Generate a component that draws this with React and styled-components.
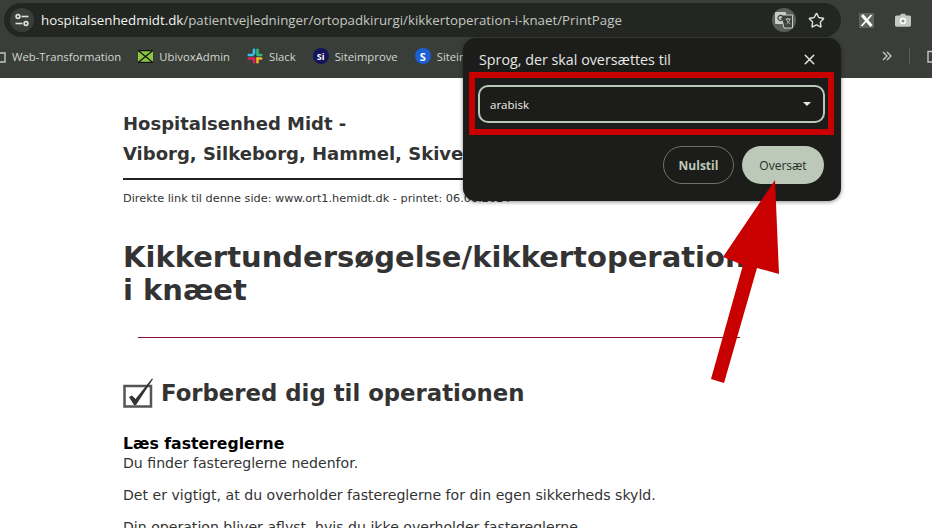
import React from "react";
import styled, { createGlobalStyle } from "styled-components";
import { Star, X } from "lucide-react";

const GlobalStyle = createGlobalStyle`
    html, body {
        margin: 0;
        padding: 0;
        background: #fff;
        overflow: hidden;
    }
`;

const Screen = styled.div`
    position: relative;
    width: 932px;
    height: 528px;
    overflow: hidden;
    font-family: "DejaVu Sans", sans-serif;
`;

const Chrome = styled.header`
    height: 78px;
    background: #3a3e39;
    font-family: "Open Sans", "Noto Sans", sans-serif;
`;

const TopRow = styled.div`
    display: flex;
    align-items: flex-start;
    height: 38px;
    padding: 3px 0 0 4px;
    box-sizing: border-box;
`;

const UrlPill = styled.div`
    display: flex;
    align-items: center;
    flex: none;
    width: 837px;
    height: 34px;
    background: #232622;
    border-radius: 17px;
    padding: 0 16px 0 6px;
    box-sizing: border-box;
`;

const RoundIcon = styled.span`
    display: flex;
    align-items: center;
    justify-content: center;
    flex: none;
    width: 24px;
    height: 24px;
    border-radius: 50%;
    background: ${p => p.$bg || "transparent"};
`;

const UrlText = styled.div`
    flex: 1;
    margin-left: 7px;
    font-size: 13.3px;
    color: #c4c8c1;
    white-space: nowrap;
`;

const Host = styled.span`
    color: #f1f3ee;
`;

const ToolIcons = styled.div`
    display: flex;
    align-items: center;
    gap: 12px;
`;

const Extensions = styled.div`
    display: flex;
    align-items: center;
    gap: 21px;
    height: 34px;
    margin-left: 18px;
`;

const BookmarkRow = styled.nav`
    display: flex;
    align-items: center;
    height: 38px;
    padding-bottom: 2px;
    box-sizing: border-box;
    font-size: 11.3px;
    color: #d3d6d0;
    white-space: nowrap;
`;

const BookmarkList = styled.div`
    display: flex;
    align-items: center;
    flex: 1;
    min-width: 0;
    margin-left: -10px;
    overflow: visible;
`;

const Bookmark = styled.span`
    display: flex;
    align-items: center;
    gap: 6px;
    margin-right: 17px;
`;

const Badge = styled.span`
    display: flex;
    align-items: center;
    justify-content: center;
    width: 16px;
    height: 16px;
    border-radius: 50%;
    background: ${p => p.$bg};
    color: #fff;
    font-size: ${p => p.$size || 9}px;
    font-weight: 700;
`;

const BarEnd = styled.div`
    display: flex;
    align-items: center;
    flex: none;
    gap: 17px;
    margin-right: -11px;
`;

const Divider = styled.span`
    width: 1px;
    height: 16px;
    background: #5b5f5a;
`;

const Page = styled.main`
    width: 632px;
    padding: 31px 0 0 123px;
    color: #333;
`;

const Org = styled.div`
    font-size: 18px;
    font-weight: 700;
    line-height: 30px;
`;

const HeavyRule = styled.hr`
    height: 2px;
    margin: 9px 0 0;
    border: 0;
    background: #222;
`;

const SmallLine = styled.p`
    margin: 12px 0 0;
    font-size: 11.3px;
    line-height: 14px;
`;

const Title = styled.h1`
    margin: 35px 0 0;
    font-size: 29px;
    line-height: 33px;
    font-weight: 700;
`;

const ThinRule = styled.hr`
    height: 1px;
    margin: 30px 15px 0;
    border: 0;
    background: #8a0f3c;
`;

const SectionHead = styled.h2`
    display: flex;
    align-items: center;
    gap: 7px;
    margin: 38px 0 0;
    font-size: 22.8px;
    line-height: 34px;
    font-weight: 700;
`;

const SubHead = styled.h3`
    margin: 24px 0 0;
    font-size: 15.7px;
    line-height: 19px;
    font-weight: 700;
    color: #000;
`;

const Body = styled.p`
    margin: ${p => (p.$tight ? "1px 0 0" : "13px 0 0")};
    font-size: 14.1px;
    line-height: 19px;
`;

const Popup = styled.section`
    position: absolute;
    left: 463px;
    top: 38px;
    width: 378px;
    height: 163px;
    box-sizing: border-box;
    padding: 0 17px 0 16px;
    background: #1c1d1b;
    border-radius: 13px;
    box-shadow: 0 1px 4px rgba(0, 0, 0, 0.45);
    font-family: "Open Sans", "Noto Sans", sans-serif;
`;

const PopupHead = styled.div`
    display: flex;
    align-items: center;
    justify-content: space-between;
    height: 34px;
    padding: 9px 6px 0 0;
    box-sizing: border-box;
    font-size: 14.3px;
    color: #e6e8e3;
`;

const Highlight = styled.div`
    height: 63px;
    margin: 0 -10px;
    padding: 7px 3px;
    border: 6px solid #c80000;
    box-sizing: border-box;
`;

const Select = styled.div`
    display: flex;
    align-items: center;
    justify-content: space-between;
    height: 38px;
    padding: 0 12.5px 0 10px;
    box-sizing: border-box;
    border: 2px solid #bcc8b8;
    border-radius: 10px;
    font-size: 11.5px;
    color: #eceee9;
`;

const Caret = styled.span`
    width: 0;
    height: 0;
    border-left: 4.5px solid transparent;
    border-right: 4.5px solid transparent;
    border-top: 4.5px solid #e6e8e3;
`;

const Actions = styled.div`
    display: flex;
    justify-content: flex-end;
    gap: 8px;
    margin-top: 11px;
`;

const Button = styled.button`
    height: 38px;
    width: ${p => (p.$primary ? "82px" : "71px")};
    padding: 0;
    border-radius: 19px;
    border: ${p => (p.$primary ? "0" : "1px solid #6d716b")};
    background: ${p => (p.$primary ? "#bcc8b8" : "transparent")};
    color: ${p => (p.$primary ? "#2a3029" : "#bcc8b8")};
    font-family: inherit;
    font-size: 12px;
    font-weight: ${p => (p.$primary ? 400 : 700)};
`;

const ArrowSvg = styled.svg`
    position: absolute;
    left: 0;
    top: 0;
    pointer-events: none;
`;

function TuneIcon() {
    return (
        <svg width="16" height="14" viewBox="0 0 16 14" fill="none" stroke="#dfe2dc" strokeWidth="1.6">
            <circle cx="4" cy="3.500" r="1.900" />
            <path d="M7.500 3.500H14.500" />
            <path d="M1.500 10.500H8.500" />
            <circle cx="12" cy="10.500" r="1.900" />
        </svg>
    );
}

function TranslateIcon() {
    return (
        <svg width="20" height="18" viewBox="0 0 20 18">
            <rect x="1" y="1" width="11" height="12" rx="1" fill="#c9ccc7" />
            <path d="M7 4h11.5v13H10z" fill="#3d403c" stroke="#c9ccc7" strokeWidth="1" />
            <path d="M8.600 5.300a2.600 2.600 0 1 0 .5 2.400H6.600" fill="none" stroke="#3d403c" strokeWidth="1.200" />
            <path d="M11.500 8h5M14 7v1M12.500 8c.6 2.500 2.500 4.500 4 5M16 8c-.6 2.500-2 4-3.500 5" fill="none" stroke="#c9ccc7" strokeWidth="0.900" />
        </svg>
    );
}

function FolderIcon() {
    return (
        <svg width="16" height="14" viewBox="0 0 16 14" fill="none" stroke="#c4c8c1" strokeWidth="1.400">
            <path d="M1 2.500h5l1.500 1.500H15v9H1z" />
        </svg>
    );
}

function ImageIcon() {
    return (
        <svg width="15" height="13" viewBox="0 0 15 13">
            <rect x="0" y="0" width="15" height="13" fill="#8cc63f" />
            <path d="M0 .5h15M0 12.500h15M0 .5l15 12M15 .5L0 12.500" stroke="#111" strokeWidth="1.300" />
        </svg>
    );
}

function SlackIcon() {
    return (
        <svg width="16" height="16" viewBox="0 0 16 16">
            <rect x="5.700" y="0.500" width="2.600" height="6.300" rx="1.300" fill="#36c5f0" />
            <rect x="0.500" y="5.700" width="6.300" height="2.600" rx="1.300" fill="#36c5f0" />
            <rect x="9.200" y="0.500" width="2.600" height="6.300" rx="1.300" fill="#2eb67d" />
            <rect x="9.200" y="5.700" width="6.300" height="2.600" rx="1.300" fill="#2eb67d" />
            <rect x="9.200" y="9.200" width="6.300" height="2.600" rx="1.300" fill="#ecb22e" />
            <rect x="9.200" y="9.200" width="2.600" height="6.300" rx="1.300" fill="#ecb22e" />
            <rect x="0.500" y="9.200" width="6.300" height="2.600" rx="1.300" fill="#e01e5a" />
            <rect x="5.700" y="9.200" width="2.600" height="6.300" rx="1.300" fill="#e01e5a" />
        </svg>
    );
}

function XExtensionIcon() {
    return (
        <svg width="15" height="15" viewBox="0 0 15 15">
            <rect width="15" height="15" fill="#5f635e" />
            <path d="M3 2l9.500 11" stroke="#fff" strokeWidth="3" />
            <path d="M12.500 2L2.500 13" stroke="#fff" strokeWidth="1.800" />
        </svg>
    );
}

function CameraIcon() {
    return (
        <svg width="16" height="14" viewBox="0 0 16 14">
            <path d="M1.500 2.500H5L6 .8h4l1 1.700h3.500A1.500 1.500 0 0 1 16 4v8.300a1.400 1.400 0 0 1-1.400 1.400H1.400A1.400 1.400 0 0 1 0 12.300V4a1.500 1.500 0 0 1 1.500-1.500z" fill="#c4c8c1" />
            <circle cx="8" cy="8" r="3.200" fill="#fff" />
            <circle cx="8" cy="8" r="1.600" fill="#8a8e89" />
        </svg>
    );
}

function ChevronsIcon() {
    return (
        <svg width="10" height="10" viewBox="0 0 10 10" fill="none" stroke="#c4c8c1" strokeWidth="1.400">
            <path d="M1 1l4 4-4 4M5 1l4 4-4 4" />
        </svg>
    );
}

function CheckBoxIcon() {
    return (
        <svg width="31" height="31" viewBox="0 0 31 31">
            <rect x="1.500" y="8" width="26.500" height="20.500" fill="none" stroke="#555" strokeWidth="2.500" />
            <polygon points="6,19 9,17.500 12.500,21 29,0.500 30,1 13,27 11,27" fill="#333" />
        </svg>
    );
}

export default function App() {
    return (
        <Screen>
            <GlobalStyle />
            <Chrome>
                <TopRow>
                    <UrlPill>
                        <RoundIcon $bg="#3a3e39"><TuneIcon /></RoundIcon>
                        <UrlText>
                            <Host>hospitalsenhedmidt.dk</Host>/patientvejledninger/ortopadkirurgi/kikkertoperation-i-knaet/PrintPage
                        </UrlText>
                        <ToolIcons>
                            <RoundIcon $bg="#5b5f5a"><TranslateIcon /></RoundIcon>
                            <Star size={17} color="#dfe2dc" strokeWidth={2} />
                        </ToolIcons>
                    </UrlPill>
                    <Extensions>
                        <XExtensionIcon />
                        <CameraIcon />
                    </Extensions>
                </TopRow>
                <BookmarkRow>
                    <BookmarkList>
                        <Bookmark><FolderIcon />Web-Transformation</Bookmark>
                        <Bookmark><ImageIcon />UbivoxAdmin</Bookmark>
                        <Bookmark><SlackIcon />Slack</Bookmark>
                        <Bookmark><Badge $bg="#14145c">Si</Badge>Siteimprove</Bookmark>
                        <Bookmark><Badge $bg="#1d5fd6" $size={11}>S</Badge>Siteimprove</Bookmark>
                    </BookmarkList>
                    <BarEnd>
                        <ChevronsIcon />
                        <Divider />
                        <FolderIcon />
                    </BarEnd>
                </BookmarkRow>
            </Chrome>
            <Page>
                <Org>Hospitalsenhed Midt -</Org>
                <Org>Viborg, Silkeborg, Hammel, Skive</Org>
                <HeavyRule />
                <SmallLine>Direkte link til denne side: www.ort1.hemidt.dk - printet: 06.06.2024</SmallLine>
                <Title>Kikkertundersøgelse/kikkertoperation i knæet</Title>
                <ThinRule />
                <SectionHead><CheckBoxIcon />Forbered dig til operationen</SectionHead>
                <SubHead>Læs fastereglerne</SubHead>
                <Body $tight>Du finder fastereglerne nedenfor.</Body>
                <Body>Det er vigtigt, at du overholder fastereglerne for din egen sikkerheds skyld.</Body>
                <Body>Din operation bliver aflyst, hvis du ikke overholder fastereglerne.</Body>
            </Page>
            <Popup>
                <PopupHead>
                    Sprog, der skal oversættes til
                    <X size={17} color="#e6e8e3" strokeWidth={2} />
                </PopupHead>
                <Highlight>
                    <Select>arabisk<Caret /></Select>
                </Highlight>
                <Actions>
                    <Button>Nulstil</Button>
                    <Button $primary>Oversæt</Button>
                </Actions>
            </Popup>
            <ArrowSvg width="932" height="528" viewBox="0 0 932 528">
                <polygon points="775,180 779,274 757,268 724,383 711,379 743,265 723,257" fill="#c80000" />
            </ArrowSvg>
        </Screen>
    );
}
